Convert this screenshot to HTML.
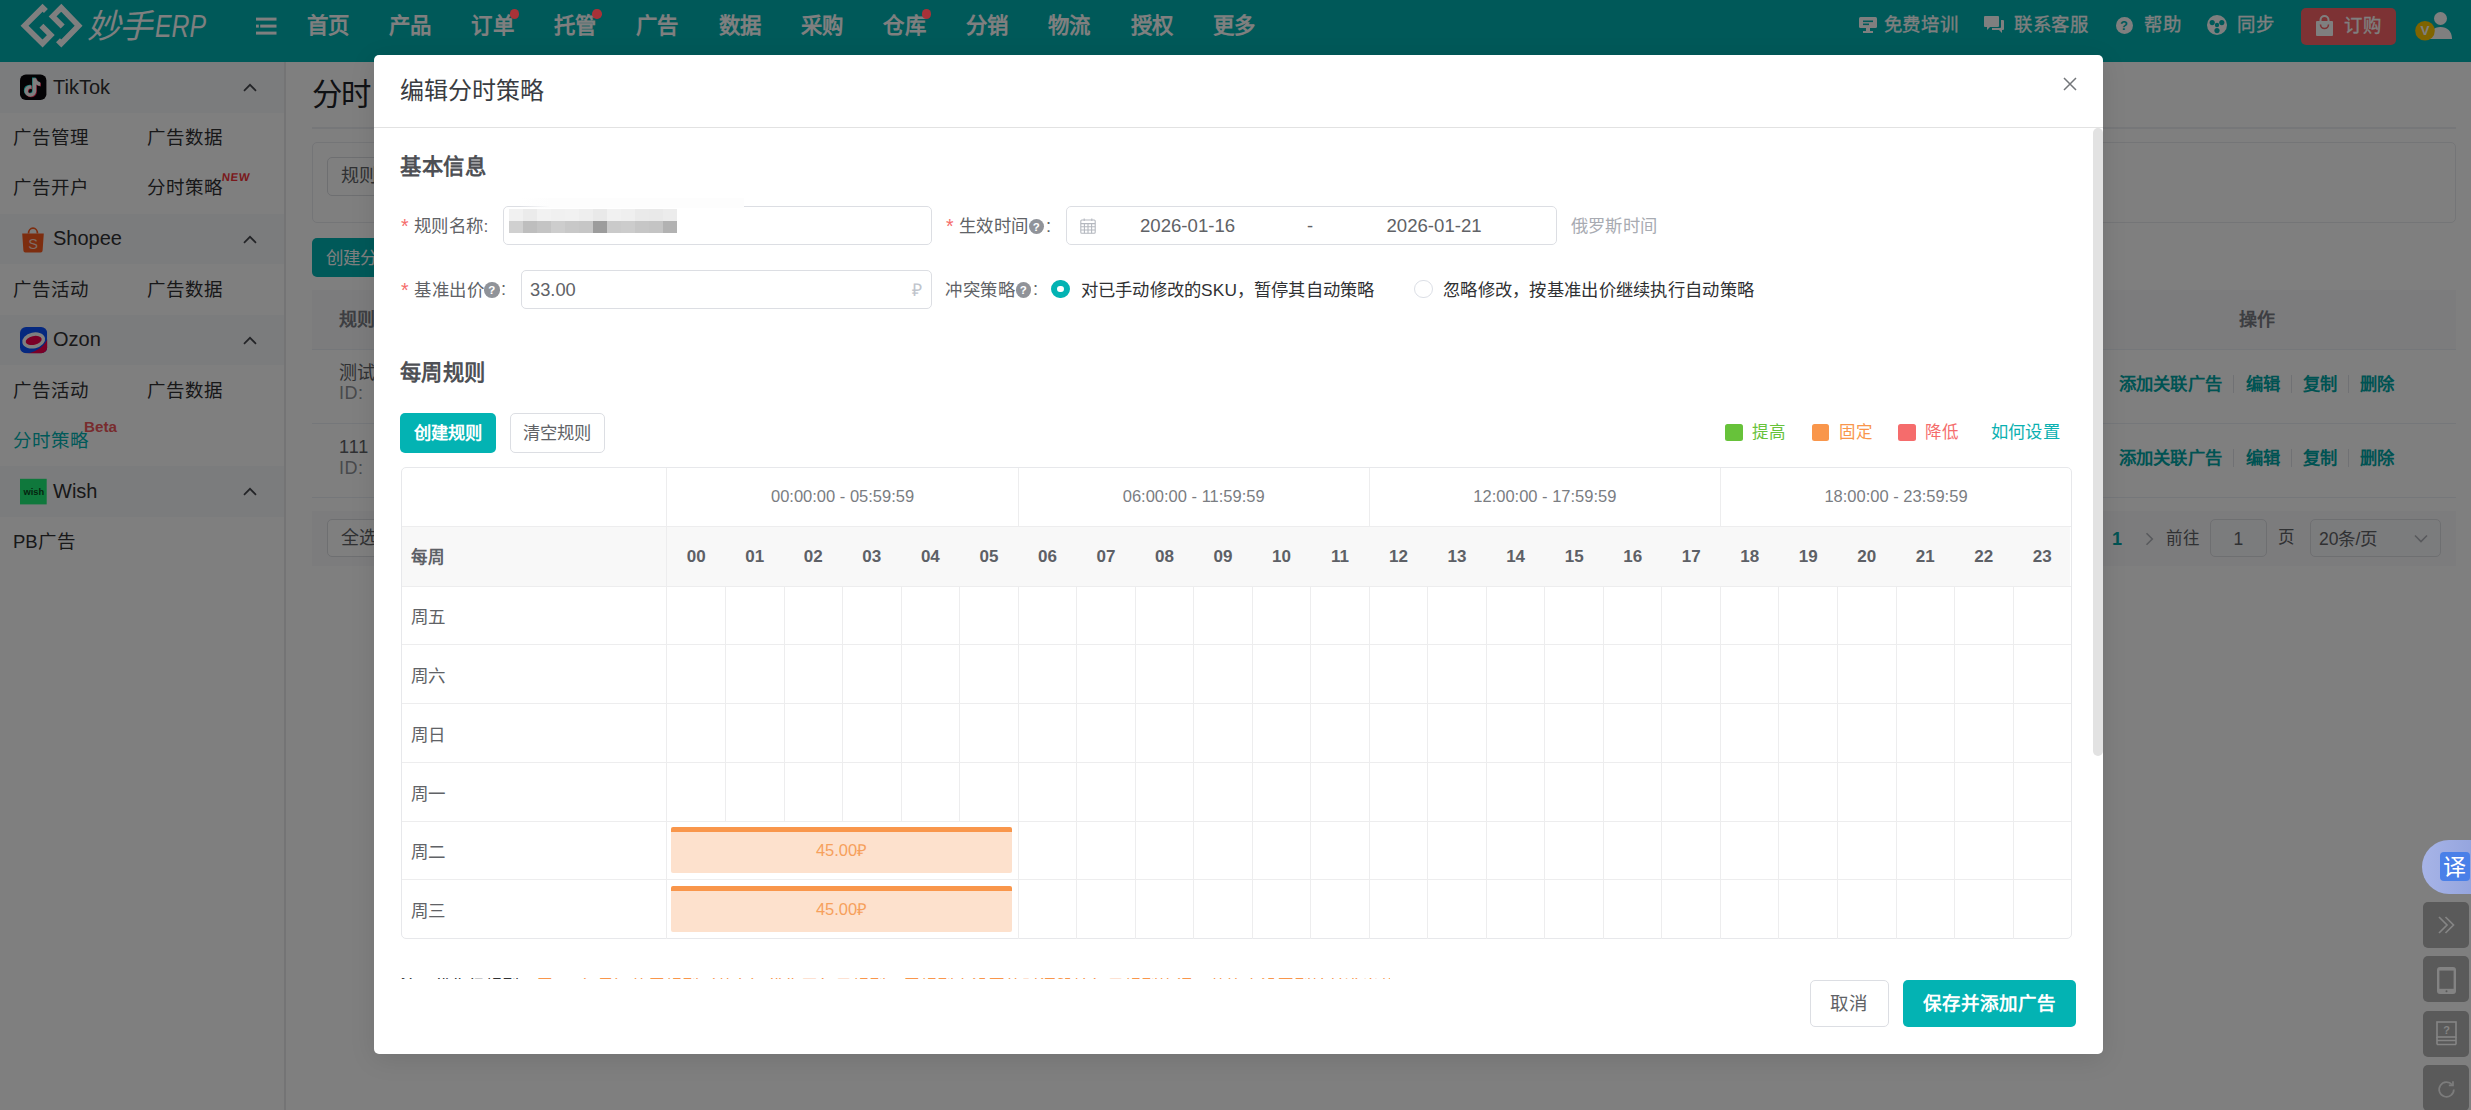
<!DOCTYPE html>
<html lang="zh-CN"><head><meta charset="utf-8"><title>编辑分时策略</title>
<style>
*{box-sizing:border-box;margin:0;padding:0}
html,body{width:2471px;height:1110px;overflow:hidden;background:#fff;font-family:"Liberation Sans", sans-serif;}
.t{position:absolute;white-space:nowrap;overflow:visible}
.b{position:absolute}
.abs{position:absolute}
#page,#mask,#modal,#tools{position:absolute;left:0;top:0}
#page{width:2471px;height:1110px;background:#fff;overflow:hidden}
#mask{width:2471px;height:1110px;background:rgba(0,0,0,.5)}
svg{position:absolute;overflow:visible}
</style></head><body>
<div id="page">
<div class="b" style="left:0px;top:0px;width:2471px;height:62px;background:#00b3b3"></div>
<svg style="left:0;top:0" width="90" height="62" viewBox="0 0 90 62" fill="none" stroke="#fff" stroke-width="5.6" stroke-linejoin="miter" stroke-miterlimit="10"><path d="M45.9 11 L42.57 7.73 L24.54 25.76 L42.57 43.56 L50.77 35.13 L41.4 25.76"/><path d="M62.7 26.5 L52.64 16.39 L61.3 7.73 L78.64 25.76 L61.3 43.56 L58 40.28"/></svg>
<div class="t" style="left:86.5px;top:5.20px;height:44px;line-height:44px;font-size:33.5px;color:#fff;font-style:italic;letter-spacing:-.5px;">妙手</div>
<div class="t" style="left:154.5px;top:4.10px;height:44px;line-height:44px;font-size:32px;color:#fff;font-style:italic;transform:scaleX(.775);transform-origin:left center;">ERP</div>
<svg style="left:256px;top:17px" width="21" height="18" viewBox="0 0 21 18" fill="#fff"><rect x="0" y="0.6" width="20.5" height="3"/><rect x="4.2" y="7.6" width="16.3" height="3"/><rect x="0" y="7.6" width="2.8" height="3"/><rect x="0" y="14.6" width="20.5" height="3"/></svg>
<div class="t" style="left:306.5px;top:6.00px;height:40px;line-height:40px;font-size:21.4px;color:#fff;font-weight:bold;letter-spacing:.3px;">首页</div>
<div class="t" style="left:388.9px;top:6.00px;height:40px;line-height:40px;font-size:21.4px;color:#fff;font-weight:bold;letter-spacing:.3px;">产品</div>
<div class="t" style="left:471.3px;top:6.00px;height:40px;line-height:40px;font-size:21.4px;color:#fff;font-weight:bold;letter-spacing:.3px;">订单</div>
<div class="t" style="left:553.7px;top:6.00px;height:40px;line-height:40px;font-size:21.4px;color:#fff;font-weight:bold;letter-spacing:.3px;">托管</div>
<div class="t" style="left:636.1px;top:6.00px;height:40px;line-height:40px;font-size:21.4px;color:#fff;font-weight:bold;letter-spacing:.3px;">广告</div>
<div class="t" style="left:718.5px;top:6.00px;height:40px;line-height:40px;font-size:21.4px;color:#fff;font-weight:bold;letter-spacing:.3px;">数据</div>
<div class="t" style="left:800.9000000000001px;top:6.00px;height:40px;line-height:40px;font-size:21.4px;color:#fff;font-weight:bold;letter-spacing:.3px;">采购</div>
<div class="t" style="left:883.3000000000001px;top:6.00px;height:40px;line-height:40px;font-size:21.4px;color:#fff;font-weight:bold;letter-spacing:.3px;">仓库</div>
<div class="t" style="left:965.7px;top:6.00px;height:40px;line-height:40px;font-size:21.4px;color:#fff;font-weight:bold;letter-spacing:.3px;">分销</div>
<div class="t" style="left:1048.1px;top:6.00px;height:40px;line-height:40px;font-size:21.4px;color:#fff;font-weight:bold;letter-spacing:.3px;">物流</div>
<div class="t" style="left:1130.5px;top:6.00px;height:40px;line-height:40px;font-size:21.4px;color:#fff;font-weight:bold;letter-spacing:.3px;">授权</div>
<div class="t" style="left:1212.9px;top:6.00px;height:40px;line-height:40px;font-size:21.4px;color:#fff;font-weight:bold;letter-spacing:.3px;">更多</div>
<svg style="left:1859px;top:16px" width="18" height="18" viewBox="0 0 18 18" fill="#fff"><rect x="0" y="1" width="18" height="11" rx="1.5"/><rect x="7" y="12" width="4" height="3"/><rect x="4" y="15" width="10" height="2"/><rect x="4" y="4.5" width="10" height="1.6" fill="#00b3b3"/><rect x="4" y="7.5" width="6" height="1.6" fill="#00b3b3"/></svg>
<div class="t" style="left:1883.5px;top:5.40px;height:40px;line-height:40px;font-size:18.4px;color:#fff;letter-spacing:.7px;-webkit-text-stroke:.3px #fff;">免费培训</div>
<svg style="left:1984px;top:16px" width="20" height="18" viewBox="0 0 20 18" fill="#fff"><path d="M1 0h13a1 1 0 0 1 1 1v9a1 1 0 0 1-1 1H6l-3 3v-3H1a1 1 0 0 1-1-1V1a1 1 0 0 1 1-1z"/><path d="M17 4h2a1 1 0 0 1 1 1v8a1 1 0 0 1-1 1h-1v3l-3-3H8v-2h8a1 1 0 0 0 1-1z"/></svg>
<div class="t" style="left:2014px;top:5.40px;height:40px;line-height:40px;font-size:18.4px;color:#fff;letter-spacing:.7px;-webkit-text-stroke:.3px #fff;">联系客服</div>
<div class="b" style="left:2115.5px;top:17px;width:17px;height:17px;background:#fff;border-radius:50%"></div>
<div class="t" style="left:2115.5px;top:15.60px;height:20px;line-height:20px;font-size:13px;color:#00b3b3;font-weight:bold;width:17px;text-align:center;">?</div>
<div class="t" style="left:2144px;top:5.40px;height:40px;line-height:40px;font-size:18.4px;color:#fff;letter-spacing:.7px;-webkit-text-stroke:.3px #fff;">帮助</div>
<svg style="left:2207px;top:15px" width="20" height="20" viewBox="0 0 20 20"><circle cx="10" cy="10" r="10" fill="#fff"/><circle cx="10" cy="10" r="2.2" fill="#00b3b3"/><circle cx="5.2" cy="7.6" r="2.6" fill="#00b3b3"/><circle cx="14.8" cy="7.6" r="2.6" fill="#00b3b3"/><circle cx="10" cy="15.6" r="2.6" fill="#00b3b3"/></svg>
<div class="t" style="left:2237px;top:5.40px;height:40px;line-height:40px;font-size:18.4px;color:#fff;letter-spacing:.7px;-webkit-text-stroke:.3px #fff;">同步</div>
<div class="b" style="left:2301px;top:8px;width:95px;height:36.5px;background:#fa6468;border-radius:5px"></div>
<svg style="left:2315px;top:15px" width="19" height="21" viewBox="0 0 19 21" fill="#fff"><path d="M2 6h15a1 1 0 0 1 1 1v13a1 1 0 0 1-1 1H2a1 1 0 0 1-1-1V7a1 1 0 0 1 1-1z"/><path d="M5.5 7V5a4 4 0 0 1 8 0v2" fill="none" stroke="#fff" stroke-width="2"/><path d="M5.5 9.5a4 4 0 0 0 8 0" fill="none" stroke="#fa6468" stroke-width="1.6"/></svg>
<div class="t" style="left:2344px;top:5.60px;height:40px;line-height:40px;font-size:18.4px;color:#fff;letter-spacing:.7px;-webkit-text-stroke:.3px #fff;">订购</div>
<svg style="left:2412px;top:8px" width="46" height="40" viewBox="0 0 46 40"><circle cx="28.5" cy="10.5" r="6.5" fill="#fff"/><path d="M17 31c0-8 5-12 11.5-12S40 23 40 31z" fill="#fff"/><circle cx="13" cy="22.8" r="9.8" fill="#ffc800"/></svg>
<div class="t" style="left:2415.5px;top:21.00px;height:20px;line-height:20px;font-size:13.5px;color:#fff;font-weight:bold;width:19px;text-align:center;">V</div>
<div class="b" style="left:0px;top:62px;width:284px;height:1048px;background:#fff"></div>
<div class="b" style="left:284px;top:62px;width:2px;height:1048px;background:#e9e9eb"></div>
<div class="b" style="left:0px;top:62px;width:284px;height:50.5px;background:#f7f8fa"></div>
<svg style="left:20px;top:74.2px" width="26.4" height="26" viewBox="0 0 27 27" preserveAspectRatio="none"><rect y=".6" width="27" height="26.4" rx="6" fill="#08060a"/><g transform="translate(13.5 13.7) scale(1.2) translate(-14.6 -13.3)"><path d="M14.2 5.5h3c.2 2 1.5 3.4 3.4 3.6v3c-1.3 0-2.5-.4-3.4-1.1v5.6a5 5 0 1 1-5-5c.3 0 .6 0 .9.1v3.1a2 2 0 1 0 1.1 1.8z" fill="#25f4ee" transform="translate(-.6 -.5)"/><path d="M14.2 5.5h3c.2 2 1.5 3.4 3.4 3.6v3c-1.3 0-2.5-.4-3.4-1.1v5.6a5 5 0 1 1-5-5c.3 0 .6 0 .9.1v3.1a2 2 0 1 0 1.1 1.8z" fill="#fe2c55" transform="translate(.6 .5)"/><path d="M14.2 5.5h3c.2 2 1.5 3.4 3.4 3.6v3c-1.3 0-2.5-.4-3.4-1.1v5.6a5 5 0 1 1-5-5c.3 0 .6 0 .9.1v3.1a2 2 0 1 0 1.1 1.8z" fill="#fff"/></g></svg>
<div class="t" style="left:53px;top:66.50px;height:40px;line-height:40px;font-size:20px;color:#303133;">TikTok</div>
<svg style="left:242.5px;top:83px" width="14" height="9" viewBox="0 0 14 9" fill="none" stroke="#46494f" stroke-width="1.7"><path d="M1 7.8 L7 1.8 L13 7.8"/></svg>
<div class="b" style="left:0px;top:213.5px;width:284px;height:50.5px;background:#f7f8fa"></div>
<svg style="left:21px;top:225.7px" width="24" height="27" viewBox="0 0 24 27"><path d="M1.2 7.5h21.6l-1.2 17a2 2 0 0 1-2 1.9H4.4a2 2 0 0 1-2-1.9z" fill="#fa5a1e"/><path d="M7.5 7.5a4.5 5.3 0 0 1 9 0" fill="none" stroke="#fa5a1e" stroke-width="1.8"/><text x="12" y="23" font-size="14.5" font-weight="normal" fill="#ffd9cc" text-anchor="middle" font-family="Liberation Sans, sans-serif">S</text></svg>
<div class="t" style="left:53px;top:218.00px;height:40px;line-height:40px;font-size:20px;color:#303133;">Shopee</div>
<svg style="left:242.5px;top:234.5px" width="14" height="9" viewBox="0 0 14 9" fill="none" stroke="#46494f" stroke-width="1.7"><path d="M1 7.8 L7 1.8 L13 7.8"/></svg>
<div class="b" style="left:0px;top:314.5px;width:284px;height:50.5px;background:#f7f8fa"></div>
<svg style="left:19.8px;top:326.7px" width="27.2" height="26.3" viewBox="0 0 27 27" preserveAspectRatio="none"><defs><clipPath id="oz"><rect width="27" height="27" rx="6"/></clipPath></defs><g clip-path="url(#oz)"><rect width="27" height="27" fill="#0a50ff"/><path d="M3 27.5 C13 27 23 22 27.5 12 L28 28 Z" fill="#f5004f"/><g transform="rotate(-13 13.6 13.8)"><ellipse cx="13.6" cy="13.8" rx="11.5" ry="8.1" fill="#fff"/><ellipse cx="13.6" cy="13.8" rx="8.1" ry="4.5" fill="#f5004f"/></g></g></svg>
<div class="t" style="left:53px;top:319.00px;height:40px;line-height:40px;font-size:20px;color:#303133;">Ozon</div>
<svg style="left:242.5px;top:335.5px" width="14" height="9" viewBox="0 0 14 9" fill="none" stroke="#46494f" stroke-width="1.7"><path d="M1 7.8 L7 1.8 L13 7.8"/></svg>
<div class="b" style="left:0px;top:466px;width:284px;height:50.5px;background:#f7f8fa"></div>
<svg style="left:20px;top:478.2px" width="26.7" height="26" viewBox="0 0 26.7 26"><rect y=".8" width="26.7" height="25.6" fill="#1ef078"/><text x="13.8" y="17" font-size="9.3" font-weight="bold" fill="#0a4a20" text-anchor="middle" font-family="Liberation Sans, sans-serif">wish</text></svg>
<div class="t" style="left:53px;top:470.50px;height:40px;line-height:40px;font-size:20px;color:#303133;">Wish</div>
<svg style="left:242.5px;top:487px" width="14" height="9" viewBox="0 0 14 9" fill="none" stroke="#46494f" stroke-width="1.7"><path d="M1 7.8 L7 1.8 L13 7.8"/></svg>
<div class="t" style="left:13px;top:117.50px;height:40px;line-height:40px;font-size:18.5px;color:#303133;">广告管理</div>
<div class="t" style="left:147px;top:117.50px;height:40px;line-height:40px;font-size:18.5px;color:#303133;">广告数据</div>
<div class="t" style="left:13px;top:168.00px;height:40px;line-height:40px;font-size:18.5px;color:#303133;">广告开户</div>
<div class="t" style="left:147px;top:168.00px;height:40px;line-height:40px;font-size:18.5px;color:#303133;">分时策略</div>
<div class="t" style="left:221.5px;top:168.80px;height:16px;line-height:16px;font-size:11.3px;color:#f5333a;font-weight:bold;letter-spacing:.6px;transform:skewX(-6deg);">NEW</div>
<div class="t" style="left:13px;top:269.50px;height:40px;line-height:40px;font-size:18.5px;color:#303133;">广告活动</div>
<div class="t" style="left:147px;top:269.50px;height:40px;line-height:40px;font-size:18.5px;color:#303133;">广告数据</div>
<div class="t" style="left:13px;top:370.50px;height:40px;line-height:40px;font-size:18.5px;color:#303133;">广告活动</div>
<div class="t" style="left:147px;top:370.50px;height:40px;line-height:40px;font-size:18.5px;color:#303133;">广告数据</div>
<div class="t" style="left:13px;top:421.00px;height:40px;line-height:40px;font-size:18.5px;color:#00b2b2;">分时策略</div>
<div class="t" style="left:84px;top:416.50px;height:20px;line-height:20px;font-size:15.2px;color:#f0595d;font-weight:bold;">Beta</div>
<div class="t" style="left:13px;top:522.00px;height:40px;line-height:40px;font-size:18.5px;color:#303133;">PB广告</div>
<div class="t" style="left:312px;top:69.00px;height:50px;line-height:50px;font-size:30.4px;color:#1f2329;letter-spacing:-1.4px;">分时</div>
<div class="b" style="left:312px;top:127px;width:2144px;height:1.5px;background:#eceef2"></div>
<div class="b" style="left:312px;top:142px;width:2144px;height:81px;border:1.5px solid #e8eaee;border-radius:5px;background:#fff"></div>
<div class="b" style="left:327px;top:157px;width:300px;height:38.5px;border:1.25px solid #dcdee3;border-radius:5px;background:#fff"></div>
<div class="t" style="left:341px;top:156.30px;height:40px;line-height:40px;font-size:18px;color:#606266;">规则名称</div>
<div class="b" style="left:312px;top:238px;width:160px;height:39px;background:#00b2b2;border-radius:5px"></div>
<div class="t" style="left:326px;top:237.50px;height:40px;line-height:40px;font-size:17.5px;color:#fff;">创建分时策略</div>
<div class="b" style="left:312px;top:290px;width:2144px;height:59px;background:#f9f9fa"></div>
<div class="t" style="left:339px;top:299.50px;height:40px;line-height:40px;font-size:18px;color:#7a7d84;font-weight:bold;">规则</div>
<div class="t" style="left:2239px;top:299.50px;height:40px;line-height:40px;font-size:18px;color:#7a7d84;font-weight:bold;">操作</div>
<div class="b" style="left:312px;top:349px;width:2144px;height:1.3px;background:#ebeef5"></div>
<div class="b" style="left:312px;top:422.5px;width:2144px;height:1.3px;background:#ebeef5"></div>
<div class="b" style="left:312px;top:496.5px;width:2144px;height:1.3px;background:#ebeef5"></div>
<div class="t" style="left:339px;top:353.00px;height:40px;line-height:40px;font-size:18px;color:#606266;">测试</div>
<div class="t" style="left:339px;top:373.00px;height:40px;line-height:40px;font-size:18px;color:#909399;letter-spacing:.5px;">ID:</div>
<div class="t" style="left:339px;top:427.00px;height:40px;line-height:40px;font-size:18px;color:#606266;letter-spacing:1px;">111</div>
<div class="t" style="left:339px;top:447.50px;height:40px;line-height:40px;font-size:18px;color:#909399;letter-spacing:.5px;">ID:</div>
<div class="t" style="left:2118.5px;top:363.70px;height:40px;line-height:40px;font-size:17.3px;color:#00a6a6;font-weight:bold;letter-spacing:.3px;">添加关联广告</div>
<div class="t" style="left:2245.5px;top:363.70px;height:40px;line-height:40px;font-size:17.3px;color:#00a6a6;font-weight:bold;">编辑</div>
<div class="t" style="left:2303px;top:363.70px;height:40px;line-height:40px;font-size:17.3px;color:#00a6a6;font-weight:bold;">复制</div>
<div class="t" style="left:2360px;top:363.70px;height:40px;line-height:40px;font-size:17.3px;color:#00a6a6;font-weight:bold;">删除</div>
<div class="b" style="left:2233px;top:374.7px;width:1.3px;height:18px;background:#e0e3e9"></div>
<div class="b" style="left:2290.5px;top:374.7px;width:1.3px;height:18px;background:#e0e3e9"></div>
<div class="b" style="left:2348px;top:374.7px;width:1.3px;height:18px;background:#e0e3e9"></div>
<div class="t" style="left:2118.5px;top:438.00px;height:40px;line-height:40px;font-size:17.3px;color:#00a6a6;font-weight:bold;letter-spacing:.3px;">添加关联广告</div>
<div class="t" style="left:2245.5px;top:438.00px;height:40px;line-height:40px;font-size:17.3px;color:#00a6a6;font-weight:bold;">编辑</div>
<div class="t" style="left:2303px;top:438.00px;height:40px;line-height:40px;font-size:17.3px;color:#00a6a6;font-weight:bold;">复制</div>
<div class="t" style="left:2360px;top:438.00px;height:40px;line-height:40px;font-size:17.3px;color:#00a6a6;font-weight:bold;">删除</div>
<div class="b" style="left:2233px;top:449px;width:1.3px;height:18px;background:#e0e3e9"></div>
<div class="b" style="left:2290.5px;top:449px;width:1.3px;height:18px;background:#e0e3e9"></div>
<div class="b" style="left:2348px;top:449px;width:1.3px;height:18px;background:#e0e3e9"></div>
<div class="b" style="left:312px;top:510.5px;width:2144px;height:55.5px;background:#f9f9fa"></div>
<div class="b" style="left:327px;top:519px;width:120px;height:38px;border:1.25px solid #dcdee3;border-radius:5px;background:#fff"></div>
<div class="t" style="left:341px;top:518.00px;height:40px;line-height:40px;font-size:18px;color:#606266;">全选</div>
<div class="t" style="left:2112px;top:518.50px;height:40px;line-height:40px;font-size:18px;color:#00a6a6;font-weight:bold;">1</div>
<svg style="left:2145px;top:531.5px" width="9" height="14" viewBox="0 0 9 14" fill="none" stroke="#b0b3ba" stroke-width="1.6"><path d="M1.5 1.2 L7.3 7 L1.5 12.8"/></svg>
<div class="t" style="left:2166px;top:518.00px;height:40px;line-height:40px;font-size:16.5px;color:#606266;">前往</div>
<div class="b" style="left:2209.5px;top:519px;width:57.5px;height:37.5px;border:1.25px solid #dcdee3;border-radius:5px;background:#f7f8fa"></div>
<div class="t" style="left:2209.5px;top:518.50px;height:40px;line-height:40px;font-size:17.5px;color:#606266;width:57.5px;text-align:center;">1</div>
<div class="t" style="left:2278px;top:517.00px;height:40px;line-height:40px;font-size:16.5px;color:#606266;">页</div>
<div class="b" style="left:2309.5px;top:519px;width:131px;height:37.5px;border:1.25px solid #dcdee3;border-radius:5px;background:#f7f8fa"></div>
<div class="t" style="left:2319px;top:518.50px;height:40px;line-height:40px;font-size:17.5px;color:#606266;">20条/页</div>
<svg style="left:2414px;top:534px" width="14" height="9" viewBox="0 0 14 9" fill="none" stroke="#b0b3ba" stroke-width="1.6"><path d="M1 1.5 L7 7.5 L13 1.5"/></svg>
</div>
<div id="mask"></div>
<div class="abs" style="left:0;top:0">
<div class="b" style="left:510.09999999999997px;top:9.2px;width:9.4px;height:9.4px;background:#a83238;border-radius:50%"></div>
<div class="b" style="left:592.3px;top:9.2px;width:9.4px;height:9.4px;background:#a83238;border-radius:50%"></div>
<div class="b" style="left:922.0999999999999px;top:9.2px;width:9.4px;height:9.4px;background:#a83238;border-radius:50%"></div>
</div>
<div id="tools">
<div class="b" style="left:2421.5px;top:839.5px;width:110px;height:54px;background:linear-gradient(90deg,#a7b4e7 0,#95a5de 50px,#95a5de 100%);border-radius:27px"></div>
<div class="b" style="left:2440px;top:852px;width:29.5px;height:29px;background:#4a80e8;border-radius:4px"></div>
<div class="t" style="left:2440px;top:851.80px;height:30px;line-height:30px;font-size:23px;color:#fff;width:29.5px;text-align:center;">译</div>
<div class="b" style="left:2422.5px;top:901.5px;width:46.5px;height:46px;background:#5a5a5a;border-radius:5px"></div>
<div class="b" style="left:2422.5px;top:956px;width:46.5px;height:46px;background:#5a5a5a;border-radius:5px"></div>
<div class="b" style="left:2422.5px;top:1010.5px;width:46.5px;height:46px;background:#5a5a5a;border-radius:5px"></div>
<div class="b" style="left:2422.5px;top:1065px;width:46.5px;height:46px;background:#5a5a5a;border-radius:5px"></div>
<svg style="left:2436px;top:914.5px" width="20" height="20" viewBox="0 0 20 20" fill="none" stroke="#858585" stroke-width="1.7"><path d="M3 2 L11 10 L3 18"/><path d="M9.5 2 L17.5 10 L9.5 18"/></svg>
<svg style="left:2436.5px;top:966.5px" width="19" height="27" viewBox="0 0 19 27"><rect x="0" y="0" width="19" height="27" rx="3" fill="#838383"/><rect x="2.4" y="3.6" width="14.2" height="18.2" fill="#5a5a5a"/><circle cx="9.5" cy="24.2" r="1" fill="#5a5a5a"/></svg>
<svg style="left:2436px;top:1021px" width="21" height="25" viewBox="0 0 21 25" fill="none" stroke="#858585" stroke-width="1.6"><rect x="1" y="1" width="19" height="15"/><path d="M1 19.5h19M1 23.5h19M1 16v7.5M20 16v7.5"/><text x="10.5" y="13" font-size="11" font-weight="bold" fill="#858585" stroke="none" text-anchor="middle" font-family="Liberation Sans, sans-serif">?</text></svg>
<svg style="left:2437px;top:1080px" width="19" height="19" viewBox="0 0 22 22" fill="none" stroke="#7c7c7c" stroke-width="2"><path d="M17.5 5.5 A8.5 8.5 0 1 0 19.5 11"/><path d="M18.5 1.5 V6.3 H13.7"/></svg>
</div>
<div id="modal" style="left:374px;top:55px;width:1728.5px;height:999px;background:#fff;border-radius:5px;box-shadow:0 5px 26px rgba(0,0,0,.10);overflow:hidden">
<div class="t" style="left:26px;top:15.50px;height:40px;line-height:40px;font-size:24px;color:#3a3d42;">编辑分时策略</div>
<svg style="left:1689px;top:22px" width="14" height="14" viewBox="0 0 14 14" fill="none" stroke="#73767a" stroke-width="1.5"><path d="M1 1 L13 13 M13 1 L1 13"/></svg>
<div class="b" style="left:0px;top:71.5px;width:1728.5px;height:1.3px;background:#e2e2e2"></div>
<div class="b" style="left:1718.5px;top:73px;width:10px;height:628px;background:#e2e2e2;border-radius:5px"></div>
<div class="t" style="left:26px;top:92.00px;height:40px;line-height:40px;font-size:21.3px;color:#4e5055;font-weight:bold;letter-spacing:.5px;">基本信息</div>
<div class="t" style="left:27px;top:151.30px;height:40px;line-height:40px;font-size:19.5px;color:#f56c6c;">*</div>
<div class="t" style="left:40px;top:151.00px;height:40px;line-height:40px;font-size:17.4px;color:#606266;letter-spacing:.35px;">规则名称:</div>
<div class="b" style="left:129px;top:150.5px;width:428.7px;height:39.3px;border:1.25px solid #dcdee3;border-radius:5px;background:#fff"></div>
<div class="b" style="left:135.39999999999998px;top:154px;width:14.266666666666667px;height:12.6px;background:#f1f1f1"></div>
<div class="b" style="left:135.39999999999998px;top:166.4px;width:14.266666666666667px;height:12px;background:#d0d0d0"></div>
<div class="b" style="left:149.36666666666667px;top:154px;width:14.266666666666667px;height:12.6px;background:#ebebeb"></div>
<div class="b" style="left:149.36666666666667px;top:166.4px;width:14.266666666666667px;height:12px;background:#bebebe"></div>
<div class="b" style="left:163.33333333333326px;top:154px;width:14.266666666666667px;height:12.6px;background:#f2f2f2"></div>
<div class="b" style="left:163.33333333333326px;top:166.4px;width:14.266666666666667px;height:12px;background:#c4c4c4"></div>
<div class="b" style="left:177.29999999999995px;top:154px;width:14.266666666666667px;height:12.6px;background:#f0f0f0"></div>
<div class="b" style="left:177.29999999999995px;top:166.4px;width:14.266666666666667px;height:12px;background:#cdcdcd"></div>
<div class="b" style="left:191.26666666666665px;top:154px;width:14.266666666666667px;height:12.6px;background:#f1f1f1"></div>
<div class="b" style="left:191.26666666666665px;top:166.4px;width:14.266666666666667px;height:12px;background:#c8c8c8"></div>
<div class="b" style="left:205.23333333333335px;top:154px;width:14.266666666666667px;height:12.6px;background:#eeeeee"></div>
<div class="b" style="left:205.23333333333335px;top:166.4px;width:14.266666666666667px;height:12px;background:#c6c6c6"></div>
<div class="b" style="left:219.19999999999993px;top:154px;width:14.266666666666667px;height:12.6px;background:#e9e9e9"></div>
<div class="b" style="left:219.19999999999993px;top:166.4px;width:14.266666666666667px;height:12px;background:#9c9c9c"></div>
<div class="b" style="left:233.16666666666663px;top:154px;width:14.266666666666667px;height:12.6px;background:#f1f1f1"></div>
<div class="b" style="left:233.16666666666663px;top:166.4px;width:14.266666666666667px;height:12px;background:#cacaca"></div>
<div class="b" style="left:247.13333333333333px;top:154px;width:14.266666666666667px;height:12.6px;background:#efefef"></div>
<div class="b" style="left:247.13333333333333px;top:166.4px;width:14.266666666666667px;height:12px;background:#cccccc"></div>
<div class="b" style="left:261.1px;top:154px;width:14.266666666666667px;height:12.6px;background:#eaeaea"></div>
<div class="b" style="left:261.1px;top:166.4px;width:14.266666666666667px;height:12px;background:#c6c6c6"></div>
<div class="b" style="left:275.0666666666666px;top:154px;width:14.266666666666667px;height:12.6px;background:#e9e9e9"></div>
<div class="b" style="left:275.0666666666666px;top:166.4px;width:14.266666666666667px;height:12px;background:#c4c4c4"></div>
<div class="b" style="left:289.0333333333333px;top:154px;width:14.266666666666667px;height:12.6px;background:#ececec"></div>
<div class="b" style="left:289.0333333333333px;top:166.4px;width:14.266666666666667px;height:12px;background:#b2b2b2"></div>
<div class="b" style="left:146px;top:143px;width:224px;height:9.5px;background:linear-gradient(90deg,rgba(253,253,253,0),#fdfdfd 30px,#fdfdfd 100%)"></div>
<div class="t" style="left:572px;top:151.30px;height:40px;line-height:40px;font-size:19.5px;color:#f56c6c;">*</div>
<div class="t" style="left:584.5px;top:151.00px;height:40px;line-height:40px;font-size:17.4px;color:#606266;letter-spacing:.5px;">生效时间</div>
<div class="b" style="left:654.5px;top:163.75px;width:15.5px;height:15.5px;background:#909399;border-radius:50%"></div>
<div class="t" style="left:654.5px;top:163.80px;height:16px;line-height:16px;font-size:11.5px;color:#fff;font-weight:bold;width:15.5px;text-align:center;">?</div>
<div class="t" style="left:672px;top:150.50px;height:40px;line-height:40px;font-size:18.3px;color:#606266;">:</div>
<div class="b" style="left:691.5px;top:150.5px;width:491.5px;height:39.3px;border:1.25px solid #dcdee3;border-radius:5px;background:#fff"></div>
<svg style="left:706px;top:163px" width="16" height="16" viewBox="0 0 16 16" fill="none" stroke="#b4b8bf" stroke-width="1.1"><rect x=".8" y="2" width="14.4" height="13.2" rx="1"/><path d="M.8 5.6h14.4M4.4 5.6v9.6M8 5.6v9.6M11.6 5.6v9.6M.8 8.8h14.4M.8 12h14.4M4.2 .6v2.4M11.8 .6v2.4"/></svg>
<div class="t" style="left:766px;top:151.00px;height:40px;line-height:40px;font-size:18.6px;color:#606266;">2026-01-16</div>
<div class="t" style="left:933px;top:151.00px;height:40px;line-height:40px;font-size:18.3px;color:#606266;">-</div>
<div class="t" style="left:1012.5px;top:151.00px;height:40px;line-height:40px;font-size:18.6px;color:#606266;">2026-01-21</div>
<div class="t" style="left:1196.5px;top:151.00px;height:40px;line-height:40px;font-size:17.3px;color:#a8abb2;letter-spacing:.35px;">俄罗斯时间</div>
<div class="t" style="left:27px;top:214.80px;height:40px;line-height:40px;font-size:19.5px;color:#f56c6c;">*</div>
<div class="t" style="left:40px;top:214.50px;height:40px;line-height:40px;font-size:17.4px;color:#606266;letter-spacing:.5px;">基准出价</div>
<div class="b" style="left:110px;top:227.25px;width:15.5px;height:15.5px;background:#909399;border-radius:50%"></div>
<div class="t" style="left:110px;top:227.30px;height:16px;line-height:16px;font-size:11.5px;color:#fff;font-weight:bold;width:15.5px;text-align:center;">?</div>
<div class="t" style="left:127px;top:214.00px;height:40px;line-height:40px;font-size:18.3px;color:#606266;">:</div>
<div class="b" style="left:146.5px;top:215px;width:411.2px;height:39.3px;border:1.25px solid #dcdee3;border-radius:5px;background:#fff"></div>
<div class="t" style="left:156px;top:214.50px;height:40px;line-height:40px;font-size:18.3px;color:#606266;">33.00</div>
<div class="t" style="left:538px;top:214.50px;height:40px;line-height:40px;font-size:17.5px;color:#c0c4cc;">₽</div>
<div class="t" style="left:571px;top:214.50px;height:40px;line-height:40px;font-size:17.4px;color:#606266;letter-spacing:.5px;">冲突策略</div>
<div class="b" style="left:641.5px;top:227.25px;width:15.5px;height:15.5px;background:#909399;border-radius:50%"></div>
<div class="t" style="left:641.5px;top:227.30px;height:16px;line-height:16px;font-size:11.5px;color:#fff;font-weight:bold;width:15.5px;text-align:center;">?</div>
<div class="t" style="left:659px;top:214.00px;height:40px;line-height:40px;font-size:18.3px;color:#606266;">:</div>
<div class="b" style="left:677.3px;top:224.8px;width:18.6px;height:18.6px;background:#fff;border:6.1px solid #03b3b3;border-radius:50%"></div>
<div class="t" style="left:707px;top:214.50px;height:40px;line-height:40px;font-size:17.3px;color:#303133;letter-spacing:.15px;">对已手动修改的SKU，暂停其自动策略</div>
<div class="b" style="left:1040.3px;top:224.8px;width:18.6px;height:18.6px;background:#fff;border:1.4px solid #dcdfe6;border-radius:50%"></div>
<div class="t" style="left:1069px;top:214.50px;height:40px;line-height:40px;font-size:17.3px;color:#303133;letter-spacing:.29px;">忽略修改，按基准出价继续执行自动策略</div>
<div class="t" style="left:26px;top:297.50px;height:40px;line-height:40px;font-size:21.3px;color:#4e5055;font-weight:bold;letter-spacing:.3px;">每周规则</div>
<div class="b" style="left:26px;top:358px;width:96px;height:39.5px;background:#03b3b3;border-radius:5px"></div>
<div class="t" style="left:26px;top:357.80px;height:40px;line-height:40px;font-size:17.3px;color:#fff;font-weight:bold;width:96px;text-align:center;">创建规则</div>
<div class="b" style="left:135.5px;top:358px;width:95.5px;height:39.5px;background:#fff;border:1.25px solid #dcdee3;border-radius:5px"></div>
<div class="t" style="left:135.5px;top:357.80px;height:40px;line-height:40px;font-size:17.3px;color:#606266;width:95.5px;text-align:center;">清空规则</div>
<div class="b" style="left:1351px;top:368.5px;width:17.5px;height:17.5px;background:#67c23a;border-radius:2.5px"></div>
<div class="t" style="left:1378px;top:357.00px;height:40px;line-height:40px;font-size:16.5px;color:#67c23a;">提高</div>
<div class="b" style="left:1437.5px;top:368.5px;width:17.5px;height:17.5px;background:#f9964b;border-radius:2.5px"></div>
<div class="t" style="left:1465px;top:357.00px;height:40px;line-height:40px;font-size:16.5px;color:#f9964b;">固定</div>
<div class="b" style="left:1524px;top:368.5px;width:17.5px;height:17.5px;background:#f56c6c;border-radius:2.5px"></div>
<div class="t" style="left:1551px;top:357.00px;height:40px;line-height:40px;font-size:16.5px;color:#f56c6c;">降低</div>
<div class="t" style="left:1616.5px;top:356.50px;height:40px;line-height:40px;font-size:17.3px;color:#0bb1b1;letter-spacing:.4px;">如何设置</div>
<div class="b" style="left:26.5px;top:412px;width:1671.1px;height:472.12px;border:1.25px solid #e7e8eb;border-radius:5px;background:#fff"></div>
<div class="b" style="left:27.69999999999999px;top:471.6px;width:1668.6999999999998px;height:59.60000000000002px;background:#f8f8f8"></div>
<div class="b" style="left:27.5px;top:471px;width:1669.1px;height:1px;background:#ededee"></div>
<div class="b" style="left:27.5px;top:531px;width:1669.1px;height:1px;background:#ededee"></div>
<div class="b" style="left:27.5px;top:589px;width:1669.1px;height:1px;background:#ededee"></div>
<div class="b" style="left:27.5px;top:648px;width:1669.1px;height:1px;background:#ededee"></div>
<div class="b" style="left:27.5px;top:707px;width:1669.1px;height:1px;background:#ededee"></div>
<div class="b" style="left:27.5px;top:766px;width:1669.1px;height:1px;background:#ededee"></div>
<div class="b" style="left:27.5px;top:824px;width:1669.1px;height:1px;background:#ededee"></div>
<div class="b" style="left:292px;top:413px;width:1px;height:470.52px;background:#ededee"></div>
<div class="b" style="left:644px;top:413px;width:1px;height:58.60000000000002px;background:#ededee"></div>
<div class="b" style="left:995px;top:413px;width:1px;height:58.60000000000002px;background:#ededee"></div>
<div class="b" style="left:1346px;top:413px;width:1px;height:58.60000000000002px;background:#ededee"></div>
<div class="b" style="left:351px;top:531.2px;width:1px;height:234.88px;background:#ededee"></div>
<div class="b" style="left:410px;top:531.2px;width:1px;height:234.88px;background:#ededee"></div>
<div class="b" style="left:468px;top:531.2px;width:1px;height:234.88px;background:#ededee"></div>
<div class="b" style="left:527px;top:531.2px;width:1px;height:234.88px;background:#ededee"></div>
<div class="b" style="left:585px;top:531.2px;width:1px;height:234.88px;background:#ededee"></div>
<div class="b" style="left:644px;top:531.2px;width:1px;height:352.31999999999994px;background:#ededee"></div>
<div class="b" style="left:702px;top:531.2px;width:1px;height:352.31999999999994px;background:#ededee"></div>
<div class="b" style="left:761px;top:531.2px;width:1px;height:352.31999999999994px;background:#ededee"></div>
<div class="b" style="left:819px;top:531.2px;width:1px;height:352.31999999999994px;background:#ededee"></div>
<div class="b" style="left:878px;top:531.2px;width:1px;height:352.31999999999994px;background:#ededee"></div>
<div class="b" style="left:936px;top:531.2px;width:1px;height:352.31999999999994px;background:#ededee"></div>
<div class="b" style="left:995px;top:531.2px;width:1px;height:352.31999999999994px;background:#ededee"></div>
<div class="b" style="left:1053px;top:531.2px;width:1px;height:352.31999999999994px;background:#ededee"></div>
<div class="b" style="left:1112px;top:531.2px;width:1px;height:352.31999999999994px;background:#ededee"></div>
<div class="b" style="left:1170px;top:531.2px;width:1px;height:352.31999999999994px;background:#ededee"></div>
<div class="b" style="left:1229px;top:531.2px;width:1px;height:352.31999999999994px;background:#ededee"></div>
<div class="b" style="left:1287px;top:531.2px;width:1px;height:352.31999999999994px;background:#ededee"></div>
<div class="b" style="left:1346px;top:531.2px;width:1px;height:352.31999999999994px;background:#ededee"></div>
<div class="b" style="left:1404px;top:531.2px;width:1px;height:352.31999999999994px;background:#ededee"></div>
<div class="b" style="left:1463px;top:531.2px;width:1px;height:352.31999999999994px;background:#ededee"></div>
<div class="b" style="left:1522px;top:531.2px;width:1px;height:352.31999999999994px;background:#ededee"></div>
<div class="b" style="left:1580px;top:531.2px;width:1px;height:352.31999999999994px;background:#ededee"></div>
<div class="b" style="left:1639px;top:531.2px;width:1px;height:352.31999999999994px;background:#ededee"></div>
<div class="t" style="left:293.0px;top:420.70px;height:40px;line-height:40px;font-size:16.5px;color:#7a7d82;width:351.15px;text-align:center;">00:00:00 - 05:59:59</div>
<div class="t" style="left:644.15px;top:420.70px;height:40px;line-height:40px;font-size:16.5px;color:#7a7d82;width:351.15px;text-align:center;">06:00:00 - 11:59:59</div>
<div class="t" style="left:995.3px;top:420.70px;height:40px;line-height:40px;font-size:16.5px;color:#7a7d82;width:351.15px;text-align:center;">12:00:00 - 17:59:59</div>
<div class="t" style="left:1346.45px;top:420.70px;height:40px;line-height:40px;font-size:16.5px;color:#7a7d82;width:351.15px;text-align:center;">18:00:00 - 23:59:59</div>
<div class="t" style="left:36.5px;top:481.80px;height:40px;line-height:40px;font-size:16.5px;color:#5d6066;font-weight:bold;">每周</div>
<div class="t" style="left:293.0px;top:482.00px;height:40px;line-height:40px;font-size:17px;color:#5d6066;font-weight:bold;width:58.525px;text-align:center;">00</div>
<div class="t" style="left:351.525px;top:482.00px;height:40px;line-height:40px;font-size:17px;color:#5d6066;font-weight:bold;width:58.525px;text-align:center;">01</div>
<div class="t" style="left:410.04999999999995px;top:482.00px;height:40px;line-height:40px;font-size:17px;color:#5d6066;font-weight:bold;width:58.525px;text-align:center;">02</div>
<div class="t" style="left:468.57500000000005px;top:482.00px;height:40px;line-height:40px;font-size:17px;color:#5d6066;font-weight:bold;width:58.525px;text-align:center;">03</div>
<div class="t" style="left:527.1px;top:482.00px;height:40px;line-height:40px;font-size:17px;color:#5d6066;font-weight:bold;width:58.525px;text-align:center;">04</div>
<div class="t" style="left:585.625px;top:482.00px;height:40px;line-height:40px;font-size:17px;color:#5d6066;font-weight:bold;width:58.525px;text-align:center;">05</div>
<div class="t" style="left:644.15px;top:482.00px;height:40px;line-height:40px;font-size:17px;color:#5d6066;font-weight:bold;width:58.525px;text-align:center;">06</div>
<div class="t" style="left:702.675px;top:482.00px;height:40px;line-height:40px;font-size:17px;color:#5d6066;font-weight:bold;width:58.525px;text-align:center;">07</div>
<div class="t" style="left:761.2px;top:482.00px;height:40px;line-height:40px;font-size:17px;color:#5d6066;font-weight:bold;width:58.525px;text-align:center;">08</div>
<div class="t" style="left:819.7249999999999px;top:482.00px;height:40px;line-height:40px;font-size:17px;color:#5d6066;font-weight:bold;width:58.525px;text-align:center;">09</div>
<div class="t" style="left:878.25px;top:482.00px;height:40px;line-height:40px;font-size:17px;color:#5d6066;font-weight:bold;width:58.525px;text-align:center;">10</div>
<div class="t" style="left:936.7750000000001px;top:482.00px;height:40px;line-height:40px;font-size:17px;color:#5d6066;font-weight:bold;width:58.525px;text-align:center;">11</div>
<div class="t" style="left:995.3px;top:482.00px;height:40px;line-height:40px;font-size:17px;color:#5d6066;font-weight:bold;width:58.525px;text-align:center;">12</div>
<div class="t" style="left:1053.8249999999998px;top:482.00px;height:40px;line-height:40px;font-size:17px;color:#5d6066;font-weight:bold;width:58.525px;text-align:center;">13</div>
<div class="t" style="left:1112.35px;top:482.00px;height:40px;line-height:40px;font-size:17px;color:#5d6066;font-weight:bold;width:58.525px;text-align:center;">14</div>
<div class="t" style="left:1170.875px;top:482.00px;height:40px;line-height:40px;font-size:17px;color:#5d6066;font-weight:bold;width:58.525px;text-align:center;">15</div>
<div class="t" style="left:1229.4px;top:482.00px;height:40px;line-height:40px;font-size:17px;color:#5d6066;font-weight:bold;width:58.525px;text-align:center;">16</div>
<div class="t" style="left:1287.925px;top:482.00px;height:40px;line-height:40px;font-size:17px;color:#5d6066;font-weight:bold;width:58.525px;text-align:center;">17</div>
<div class="t" style="left:1346.45px;top:482.00px;height:40px;line-height:40px;font-size:17px;color:#5d6066;font-weight:bold;width:58.525px;text-align:center;">18</div>
<div class="t" style="left:1404.975px;top:482.00px;height:40px;line-height:40px;font-size:17px;color:#5d6066;font-weight:bold;width:58.525px;text-align:center;">19</div>
<div class="t" style="left:1463.5px;top:482.00px;height:40px;line-height:40px;font-size:17px;color:#5d6066;font-weight:bold;width:58.525px;text-align:center;">20</div>
<div class="t" style="left:1522.0249999999999px;top:482.00px;height:40px;line-height:40px;font-size:17px;color:#5d6066;font-weight:bold;width:58.525px;text-align:center;">21</div>
<div class="t" style="left:1580.55px;top:482.00px;height:40px;line-height:40px;font-size:17px;color:#5d6066;font-weight:bold;width:58.525px;text-align:center;">22</div>
<div class="t" style="left:1639.075px;top:482.00px;height:40px;line-height:40px;font-size:17px;color:#5d6066;font-weight:bold;width:58.525px;text-align:center;">23</div>
<div class="t" style="left:36.5px;top:542.36px;height:40px;line-height:40px;font-size:17.5px;color:#606266;">周五</div>
<div class="t" style="left:36.5px;top:601.08px;height:40px;line-height:40px;font-size:17.5px;color:#606266;">周六</div>
<div class="t" style="left:36.5px;top:659.80px;height:40px;line-height:40px;font-size:17.5px;color:#606266;">周日</div>
<div class="t" style="left:36.5px;top:718.52px;height:40px;line-height:40px;font-size:17.5px;color:#606266;">周一</div>
<div class="t" style="left:36.5px;top:777.24px;height:40px;line-height:40px;font-size:17.5px;color:#606266;">周二</div>
<div class="t" style="left:36.5px;top:835.96px;height:40px;line-height:40px;font-size:17.5px;color:#606266;">周三</div>
<div class="b" style="left:297.20000000000005px;top:771.88px;width:340.8px;height:46.4px;background:#fde1cd;border-top:5px solid #f9964b;border-radius:2px"></div>
<div class="t" style="left:297.20000000000005px;top:775.28px;height:40px;line-height:40px;font-size:16.5px;color:#f6a05c;width:340.8px;text-align:center;">45.00₽</div>
<div class="b" style="left:297.20000000000005px;top:830.6px;width:340.8px;height:46.4px;background:#fde1cd;border-top:5px solid #f9964b;border-radius:2px"></div>
<div class="t" style="left:297.20000000000005px;top:834.00px;height:40px;line-height:40px;font-size:16.5px;color:#f6a05c;width:340.8px;text-align:center;">45.00₽</div>
<div class="abs" style="left:26px;top:923.3px;width:990px;height:1.2px;overflow:hidden;white-space:nowrap;font-size:17.3px;line-height:26px"><span style="color:#303133;position:relative;top:-5.2px">注：优先级规则：</span><span style="color:#f9964b;position:relative;top:-5.2px">周一（2号）的周规则（若有）优先于每日规则，周规则未设置的时间段按每日规则执行；若均未设置则按基准出价执行</span></div>
<div class="b" style="left:1436px;top:925px;width:78.5px;height:46.5px;background:#fff;border:1.25px solid #dcdee3;border-radius:5px"></div>
<div class="t" style="left:1436px;top:928.50px;height:40px;line-height:40px;font-size:18.5px;color:#606266;width:78.5px;text-align:center;">取消</div>
<div class="b" style="left:1529px;top:925px;width:172.5px;height:46.5px;background:#03b3b3;border-radius:5px"></div>
<div class="t" style="left:1529px;top:928.50px;height:40px;line-height:40px;font-size:18.5px;color:#fff;font-weight:bold;width:172.5px;text-align:center;">保存并添加广告</div>
</div>
</body></html>
